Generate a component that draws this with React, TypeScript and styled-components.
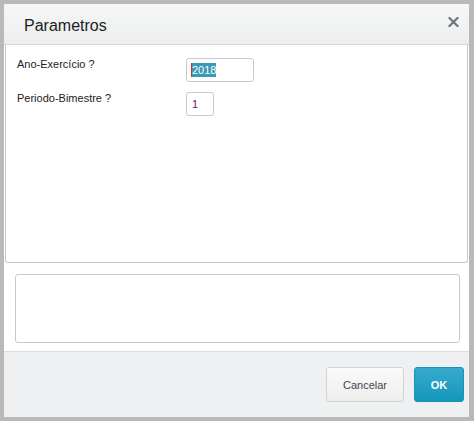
import React from "react";
import styled, { createGlobalStyle } from "styled-components";

const Global = createGlobalStyle`
  html, body { margin: 0; padding: 0; background: #b9b9b9; }
  body { font-family: "Liberation Sans", Arial, sans-serif; }
`;

const Frame = styled.div`
  width: 474px;
  height: 421px;
  box-sizing: border-box;
  padding: 4px 5px 4px 4px;
`;

const Dialog = styled.div`
  width: 465px;
  height: 413px;
  background: #ffffff;
  display: flex;
  flex-direction: column;
`;

const Header = styled.div`
  height: 40px;
  flex: none;
  border-bottom: 1px solid #d6d8d8;
  background: linear-gradient(#f6f7f7, #eceeee);
  display: flex;
  align-items: center;
  justify-content: space-between;
  padding: 0 10px 0 20px;
`;

const Title = styled.div`
  font-size: 16px;
  color: #1d1d1d;
  padding-top: 3px;
`;

const Close = styled.button`
  border: 0;
  background: none;
  padding: 0;
  width: 12px;
  height: 12px;
  display: flex;
  align-items: center;
  justify-content: center;
  margin-top: -4px;
  cursor: pointer;
`;

const Panel = styled.div`
  margin: 0 1px;
  height: 218px;
  flex: none;
  box-sizing: border-box;
  border: 1px solid #c9c9c9;
  border-top: 0;
  border-radius: 0 0 3px 3px;
  background: #fff;
  padding: 13px 0 0 11px;
  display: flex;
  flex-direction: column;
  gap: 10px;
`;

const Row = styled.div`
  display: flex;
  align-items: flex-start;
`;

const Label = styled.div`
  width: 169px;
  font-size: 11px;
  line-height: 14px;
  color: #222;
  margin-top: -1px;
`;

const Field = styled.div<{ $w: number }>`
  width: ${(p) => p.$w}px;
  height: 24px;
  box-sizing: border-box;
  border: 1px solid #c9c9c9;
  border-radius: 3px;
  padding: 4px 4px;
  font-size: 11px;
  line-height: 14px;
  display: flex;
  align-items: center;
`;

const Selected = styled.span`
  background: #3a99b5;
  color: #fff;
  border-left: 1px solid #c0392b;
`;

const Value = styled.span`
  color: #6a0f70;
  padding-left: 1px;
`;

const MessageWrap = styled.div`
  padding: 11px 9px 0 11px;
  flex: none;
`;

const Message = styled.div`
  height: 69px;
  box-sizing: border-box;
  border: 1px solid #c9c9c9;
  border-radius: 3px;
`;

const Footer = styled.div`
  margin-top: auto;
  height: 66px;
  box-sizing: border-box;
  border-top: 1px solid #dcdddd;
  background: #eff0f1;
  display: flex;
  justify-content: flex-end;
  align-items: flex-start;
  gap: 10px;
  padding: 15px 5px 0 0;
`;

const Button = styled.button<{ $primary?: boolean }>`
  height: 35px;
  box-sizing: border-box;
  border-radius: 3px;
  font-family: "Liberation Sans", Arial, sans-serif;
  font-size: 11px;
  cursor: pointer;
  padding: 0;
  border: 1px solid ${(p) => (p.$primary ? "#1a93b9" : "#d2d3d3")};
  background: ${(p) =>
    p.$primary
      ? "linear-gradient(#38abcb, #1396bd)"
      : "linear-gradient(#fbfbfb, #ededed)"};
  color: ${(p) => (p.$primary ? "#ffffff" : "#3f4650")};
  font-weight: ${(p) => (p.$primary ? 700 : 400)};
  width: ${(p) => (p.$primary ? 50 : 78)}px;
`;

export default function App() {
  return (
    <>
      <Global />
      <Frame>
        <Dialog>
          <Header>
            <Title>Parametros</Title>
            <Close aria-label="Fechar">
              <svg width="11" height="10" viewBox="0 0 11 10">
                <path
                  d="M1.5 1 L9.5 9 M9.5 1 L1.5 9"
                  stroke="#6e7480"
                  strokeWidth="2.2"
                  strokeLinecap="square"
                />
              </svg>
            </Close>
          </Header>
          <Panel>
            <Row>
              <Label>Ano-Exercício ?</Label>
              <Field $w={68}>
                <Selected>2018</Selected>
              </Field>
            </Row>
            <Row>
              <Label>Periodo-Bimestre ?</Label>
              <Field $w={28}>
                <Value>1</Value>
              </Field>
            </Row>
          </Panel>
          <MessageWrap>
            <Message />
          </MessageWrap>
          <Footer>
            <Button>Cancelar</Button>
            <Button $primary>OK</Button>
          </Footer>
        </Dialog>
      </Frame>
    </>
  );
}
